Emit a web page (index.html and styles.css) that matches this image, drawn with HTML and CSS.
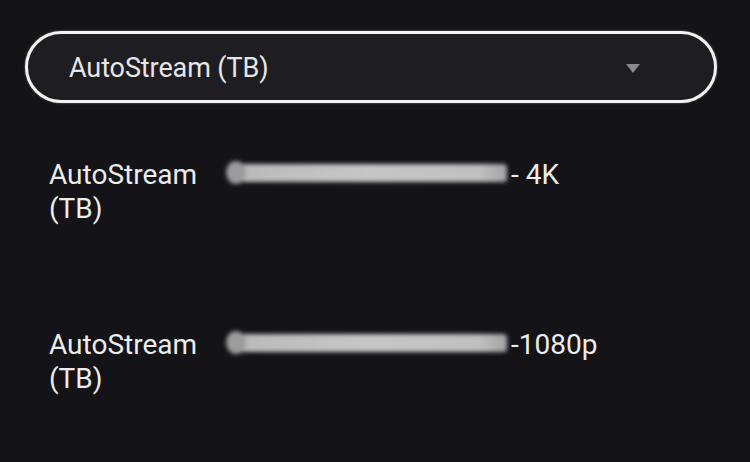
FILE: index.html
```html
<!DOCTYPE html>
<html>
<head>
<meta charset="utf-8">
<link rel="stylesheet" href="styles.css">
</head>
<body>
<div class="page">
  <div class="select">
    <span class="select-text">AutoStream (TB)</span>
    <svg class="caret" width="14" height="9" viewBox="0 0 14 9"><path d="M0 0 H14 L7 9 Z" fill="#8a8a8e"/></svg>
  </div>
  <div class="list">
    <div class="row">
      <div class="label">AutoStream (TB)</div>
      <div class="smudge"><div class="blob"></div></div>
      <div class="quality">- 4K</div>
    </div>
    <div class="row">
      <div class="label">AutoStream (TB)</div>
      <div class="smudge"><div class="blob"></div></div>
      <div class="quality">-1080p</div>
    </div>
  </div>
</div>
</body>
</html>
```

FILE: styles.css
```css
html, body {
  margin: 0;
  padding: 0;
  background: #131318;
  height: 100%;
  overflow: hidden;
}
.page {
  padding: 31px 33px 0 25px;
  font-family: Roboto, "Liberation Sans", sans-serif;
  color: #ececec;
}
.select {
  box-sizing: border-box;
  width: 692px;
  height: 72px;
  border: 3px solid #f2f2f2;
  border-radius: 36px;
  background: #1d1d22;
  display: flex;
  align-items: center;
  justify-content: space-between;
  padding: 0 74px 0 41px;
  box-shadow: 0 0 2px rgba(255,255,255,0.5);
}
.select-text {
  font-size: 27px;
  letter-spacing: -0.1px;
  color: #e6e6e6;
  margin-top: 2px;
}
.caret {
  display: block;
  margin-top: 2px;
}
.list {
  margin-top: 55px;
  padding-left: 24px;
  display: flex;
  flex-direction: column;
  gap: 102px;
}
.row {
  display: grid;
  grid-template-columns: 179px 279px auto;
  align-items: start;
  font-size: 28px;
  line-height: 34px;
  letter-spacing: 0;
}
.label {
  width: 160px;
}
.smudge {
  position: relative;
  margin-top: 6px;
  height: 18px;
  border-radius: 10px 4px 4px 10px;
  background: linear-gradient(90deg, #9a9a9a 0%, #c9c9c9 6%, #d6d6d6 50%, #cfcfcf 90%, #b0b0b0 100%);
  filter: blur(2px);
  opacity: 0.92;
}
.blob {
  position: absolute;
  left: -2px;
  top: -3px;
  width: 20px;
  height: 23px;
  border-radius: 50%;
  background: #a8a8a8;
}
.quality {
  padding-left: 4px;
}
```
